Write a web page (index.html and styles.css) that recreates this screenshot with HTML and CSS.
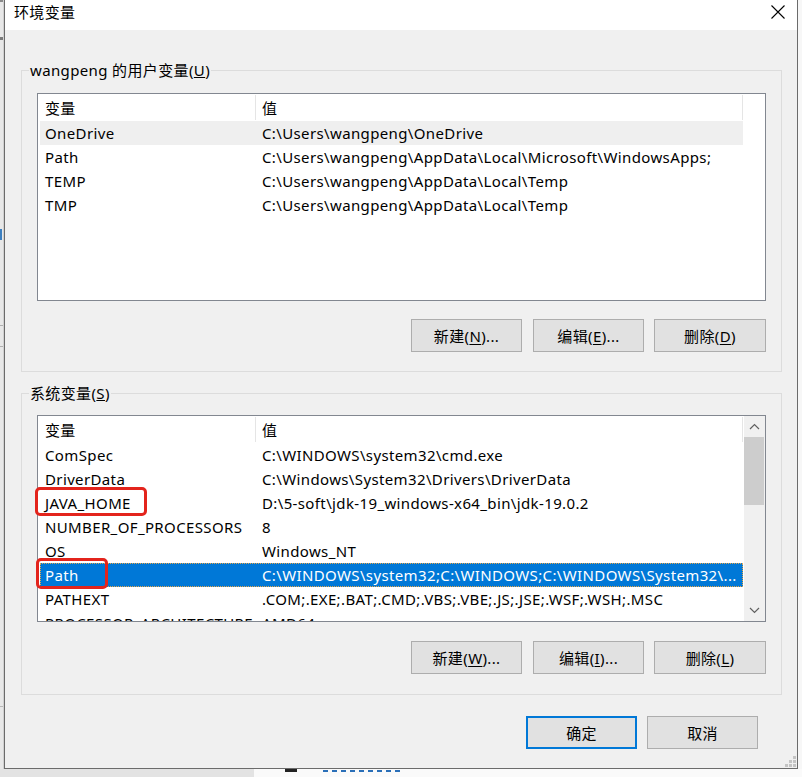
FILE: index.html
```html
<!DOCTYPE html>
<html lang="zh-CN">
<head>
<meta charset="utf-8">
<title>环境变量</title>
<link rel="stylesheet" href="styles.css">
</head>
<body>
<div class="screen">
  <div class="screen-row">
    <div class="strip-left">
      <span class="mark mark-top"></span>
      <span class="mark mark-a"></span>
      <span class="mark mark-blue"></span>
      <span class="mark mark-b"></span>
      <span class="mark mark-c"></span>
      <span class="mark mark-d"></span>
    </div>
    <div class="dialog">
      <div class="titlebar">
        <span class="title">环境变量</span>
        <svg class="close" width="14" height="14" viewBox="0 0 14 14"><path d="M0.5 0.5 L13.5 13.5 M13.5 0.5 L0.5 13.5" stroke="#000" stroke-width="1.1" fill="none"/></svg>
      </div>
      <div class="content">
        <section class="group group-user">
          <span class="group-label">wangpeng 的用户变量(<u>U</u>)</span>
          <div class="list list-user">
            <div class="list-main">
              <div class="list-head">
                <div class="hcell h1">变量</div>
                <div class="hcell h2">值</div>
              </div>
              <div class="rows">
                <div class="row row-hover"><span class="c1">OneDrive</span><span class="c2">C:\Users\wangpeng\OneDrive</span></div>
                <div class="row"><span class="c1">Path</span><span class="c2">C:\Users\wangpeng\AppData\Local\Microsoft\WindowsApps;</span></div>
                <div class="row"><span class="c1">TEMP</span><span class="c2">C:\Users\wangpeng\AppData\Local\Temp</span></div>
                <div class="row"><span class="c1">TMP</span><span class="c2">C:\Users\wangpeng\AppData\Local\Temp</span></div>
              </div>
            </div>
            <div class="list-side"></div>
          </div>
          <div class="btns">
            <button class="btn btn-first">新建(<u>N</u>)...</button>
            <button class="btn">编辑(<u>E</u>)...</button>
            <button class="btn btn-last">删除(<u>D</u>)</button>
          </div>
        </section>

        <section class="group group-sys">
          <span class="group-label">系统变量(<u>S</u>)</span>
          <div class="list list-sys">
            <div class="list-main">
              <div class="list-head">
                <div class="hcell h1">变量</div>
                <div class="hcell h2">值</div>
              </div>
              <div class="rows">
                <div class="row"><span class="c1">ComSpec</span><span class="c2">C:\WINDOWS\system32\cmd.exe</span></div>
                <div class="row"><span class="c1">DriverData</span><span class="c2">C:\Windows\System32\Drivers\DriverData</span></div>
                <div class="row"><span class="c1">JAVA_HOME</span><span class="c2">D:\5-soft\jdk-19_windows-x64_bin\jdk-19.0.2</span></div>
                <div class="row"><span class="c1">NUMBER_OF_PROCESSORS</span><span class="c2">8</span></div>
                <div class="row"><span class="c1">OS</span><span class="c2">Windows_NT</span></div>
                <div class="row row-selected"><span class="c1">Path</span><span class="c2">C:\WINDOWS\system32;C:\WINDOWS;C:\WINDOWS\System32\...</span></div>
                <div class="row"><span class="c1">PATHEXT</span><span class="c2">.COM;.EXE;.BAT;.CMD;.VBS;.VBE;.JS;.JSE;.WSF;.WSH;.MSC</span></div>
                <div class="row"><span class="c1">PROCESSOR_ARCHITECTURE</span><span class="c2">AMD64</span></div>
              </div>
            </div>
            <div class="scrollbar">
              <div class="sb-arrow"><svg width="11" height="7" viewBox="0 0 11 7"><path d="M1 6 L5.5 1.5 L10 6" stroke="#606060" stroke-width="1.2" fill="none"/></svg></div>
              <div class="sb-thumb"></div>
              <div class="sb-track"></div>
              <div class="sb-arrow"><svg width="11" height="7" viewBox="0 0 11 7"><path d="M1 1 L5.5 5.5 L10 1" stroke="#606060" stroke-width="1.2" fill="none"/></svg></div>
            </div>
            <span class="redbox redbox-java"></span>
            <span class="redbox redbox-path"></span>
          </div>
          <div class="btns">
            <button class="btn btn-first">新建(<u>W</u>)...</button>
            <button class="btn">编辑(<u>I</u>)...</button>
            <button class="btn btn-last">删除(<u>L</u>)</button>
          </div>
        </section>

        <div class="footer">
          <button class="btn btn-default">确定</button>
          <button class="btn">取消</button>
        </div>
        <svg class="grip" width="12" height="12" viewBox="0 0 12 12">
          <rect x="8" y="0" width="3" height="3" fill="#c4c4c4"/>
          <rect x="4" y="4" width="3" height="3" fill="#c4c4c4"/>
          <rect x="8" y="4" width="3" height="3" fill="#c4c4c4"/>
          <rect x="0" y="8" width="3" height="3" fill="#c4c4c4"/>
          <rect x="4" y="8" width="3" height="3" fill="#c4c4c4"/>
          <rect x="8" y="8" width="3" height="3" fill="#c4c4c4"/>
        </svg>
      </div>
    </div>
    <div class="strip-right"></div>
  </div>
  <div class="strip-bottom">
    <div class="sb-left"></div>
    <div class="sb-right"><span class="frag-dark"></span><span class="frag-blue"></span></div>
  </div>
</div>
</body>
</html>
```

FILE: styles.css
```css
* { box-sizing: border-box; }

html, body {
  margin: 0;
  padding: 0;
}

body {
  width: 802px;
  height: 777px;
  overflow: hidden;
  background: #e6e6e6;
  font-family: "Noto Sans", "Noto Sans CJK SC", sans-serif;
  font-size: 15px;
  letter-spacing: 0.37px;
  color: #000;
}

.screen {
  width: 802px;
  height: 777px;
  display: flex;
  flex-direction: column;
}

.screen-row {
  display: flex;
  height: 769px;
}

.strip-left {
  width: 4px;
  flex: none;
  background: #e8e8e8;
  position: relative;
  border-right: 1px solid #d0d0d0;
}

.mark {
  position: absolute;
  left: 0;
  width: 3px;
  display: block;
}
.mark-top { top: 0; height: 2px; background: #8a8a8a; }
.mark-a { top: 37px; height: 3px; background: #7a7a7a; }
.mark-blue { top: 229px; height: 11px; width: 2px; background: #3c7fc0; }
.mark-b { top: 325px; height: 1px; background: #b0b0b0; }
.mark-c { top: 346px; height: 1px; background: #b0b0b0; }
.mark-d { top: 706px; height: 1px; background: #b8b8b8; }

.strip-right {
  flex: 1;
  background: #f7f7f7;
}

.dialog {
  width: 794px;
  flex: none;
  border-left: 1px solid #6b6b6b;
  border-right: 1px solid #6b6b6b;
  border-bottom: 1px solid #6b6b6b;
  background: #f0f0f0;
  display: flex;
  flex-direction: column;
  box-shadow: 0 2px 6px rgba(0,0,0,0.18);
}

.titlebar {
  height: 30px;
  background: #fff;
  display: flex;
  justify-content: space-between;
  align-items: flex-start;
  padding: 2px 12px 0 9px;
}

.title {
  line-height: 20px;
  font-size: 15px;
}

.close {
  margin-top: 3px;
}

.content {
  flex: 1;
  display: flex;
  flex-direction: column;
  padding: 0 15px 0 16px;
  position: relative;
}

.group {
  position: relative;
  border: 1px solid #dcdcdc;
  padding: 22px 15px 19px 15px;
}

.group-user {
  margin-top: 40px;
}

.group-sys {
  margin-top: 21px;
  padding-top: 21px;
  padding-bottom: 20px;
}

.group-label {
  position: absolute;
  top: -11px;
  left: 7px;
  line-height: 20px;
  padding: 0 1px;
  background: #f0f0f0;
  white-space: nowrap;
}

.list {
  position: relative;
  display: flex;
  border: 1px solid #828790;
  background: #fff;
}

.list-user { height: 208px; }
.list-sys { height: 207px; }

.list-main {
  width: 705px;
  flex: none;
  display: flex;
  flex-direction: column;
  overflow: hidden;
}

.list-side {
  flex: 1;
}

.list-head {
  display: flex;
  height: 27px;
  flex: none;
}

.hcell {
  padding-top: 1px;
  border-right: 1px solid #e5e5e5;
  margin: 1px 0;
  line-height: 24px;
}

.h1 {
  width: 218px;
  padding-left: 7px;
}

.h2 {
  width: 487px;
  padding-left: 6px;
}

.rows {
  display: flex;
  flex-direction: column;
  padding-left: 2px;
}

.row {
  display: flex;
  height: 24px;
  line-height: 24px;
  white-space: nowrap;
  flex: none;
}

.row .c1 {
  width: 216px;
  padding-left: 5px;
  overflow: hidden;
}

.row .c2 {
  flex: 1;
  padding-left: 6px;
  overflow: hidden;
}

.row-hover {
  background: #efefef;
}

.row-selected {
  background: #0078d7;
  color: #fff;
  outline: 1px dotted #e6a64a;
  outline-offset: -1px;
}

.scrollbar {
  width: 22px;
  flex: none;
  background: #f0f0f0;
  border-left: 1px solid #fff;
  display: flex;
  flex-direction: column;
  padding: 0 1px 0 0;
}

.sb-arrow {
  height: 21px;
  display: flex;
  align-items: center;
  justify-content: center;
  flex: none;
}

.sb-thumb {
  height: 68px;
  background: #cdcdcd;
  flex: none;
}

.sb-track {
  flex: 1;
}

.redbox {
  position: absolute;
  border: 3px solid #e3241c;
  border-radius: 5px;
  pointer-events: none;
}

.redbox-java {
  left: -3px;
  top: 71px;
  width: 112px;
  height: 29px;
}

.redbox-path {
  left: -2px;
  top: 142px;
  width: 72px;
  height: 31px;
}

.btns {
  display: flex;
  justify-content: flex-end;
  gap: 10px;
  margin-top: 18px;
}

.btns .btn-first {
  margin-right: 1px;
}

.btns .btn-last {
  width: 112px;
}

.group-sys .btns {
  margin-top: 19px;
}

.btn {
  width: 111px;
  height: 33px;
  padding: 0;
  background: #e1e1e1;
  border: 1px solid #adadad;
  font-family: "Noto Sans", "Noto Sans CJK SC", sans-serif;
  font-size: 15px;
  letter-spacing: 0.37px;
  line-height: 20px;
  color: #000;
}

.btn u {
  text-underline-offset: 2px;
}

.btn-default {
  border: 2px solid #0078d7;
}

.footer {
  display: flex;
  justify-content: flex-end;
  gap: 10px;
  margin-top: 21px;
  padding-right: 24px;
}

.grip {
  position: absolute;
  right: 0;
  bottom: 0;
}

.strip-bottom {
  flex: 1;
  display: flex;
}

.sb-left {
  width: 254px;
  background: #e3e3e3;
}

.sb-right {
  flex: 1;
  background: #fafafa;
  position: relative;
}

.frag-dark {
  position: absolute;
  left: 31px;
  top: 0;
  width: 12px;
  height: 3px;
  background: #222;
}

.frag-blue {
  position: absolute;
  left: 69px;
  top: 1px;
  width: 80px;
  height: 2px;
  background: repeating-linear-gradient(90deg, #2a6fb8 0 5px, transparent 5px 9px);
}
```
